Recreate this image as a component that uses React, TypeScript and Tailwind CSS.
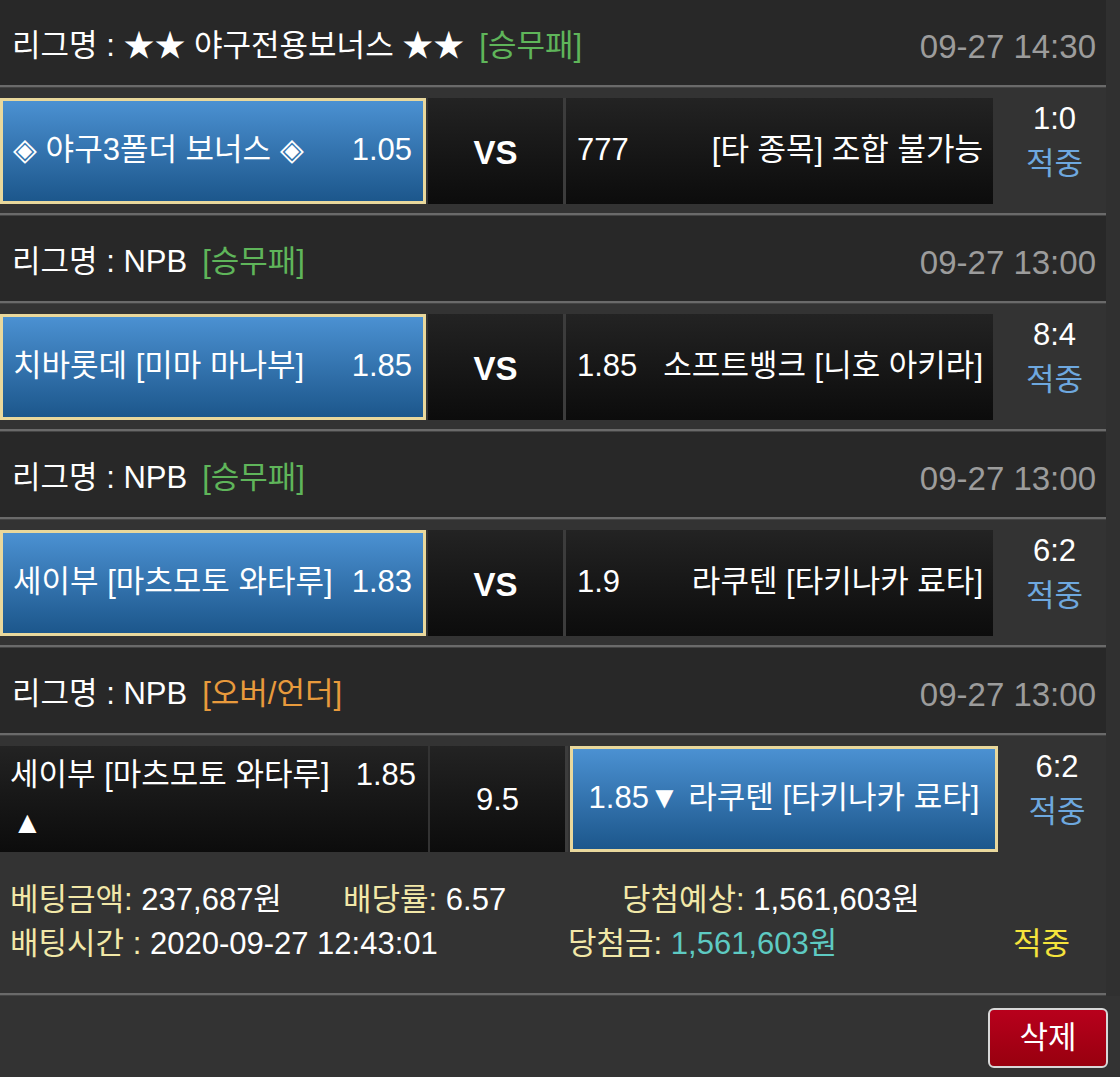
import React from 'react';

type Side = { text: string; odds: string };

type Match = {
  league: string;
  kind: string;
  kindColor: string;
  time: string;
  home: Side;
  middle: string;
  away: Side;
  picked: 'home' | 'away';
  score: string;
  result: string;
  overUnder?: boolean;
};

const matches: Match[] = [
  {
    league: '리그명 : ★★ 야구전용보너스 ★★',
    kind: '[승무패]',
    kindColor: 'text-[#5fb55a]',
    time: '09-27 14:30',
    home: { text: '◈ 야구3폴더 보너스 ◈', odds: '1.05' },
    middle: 'VS',
    away: { text: '[타 종목] 조합 불가능', odds: '777' },
    picked: 'home',
    score: '1:0',
    result: '적중',
  },
  {
    league: '리그명 : NPB',
    kind: '[승무패]',
    kindColor: 'text-[#5fb55a]',
    time: '09-27 13:00',
    home: { text: '치바롯데 [미마 마나부]', odds: '1.85' },
    middle: 'VS',
    away: { text: '소프트뱅크 [니호 아키라]', odds: '1.85' },
    picked: 'home',
    score: '8:4',
    result: '적중',
  },
  {
    league: '리그명 : NPB',
    kind: '[승무패]',
    kindColor: 'text-[#5fb55a]',
    time: '09-27 13:00',
    home: { text: '세이부 [마츠모토 와타루]', odds: '1.83' },
    middle: 'VS',
    away: { text: '라쿠텐 [타키나카 료타]', odds: '1.9' },
    picked: 'home',
    score: '6:2',
    result: '적중',
  },
  {
    league: '리그명 : NPB',
    kind: '[오버/언더]',
    kindColor: 'text-[#e89a3c]',
    time: '09-27 13:00',
    home: { text: '세이부 [마츠모토 와타루]', odds: '1.85' },
    middle: '9.5',
    away: { text: '라쿠텐 [타키나카 료타]', odds: '1.85' },
    picked: 'away',
    score: '6:2',
    result: '적중',
    overUnder: true,
  },
];

const blueCell =
  'bg-gradient-to-b from-[#4b91d2] to-[#1c578c] border-[3px] border-[#e9d89c] text-white';
const darkCell = 'bg-gradient-to-b from-[#232323] to-[#0c0c0c] text-white';

const Divider = () => (
  <div className="h-[3px] bg-[#6a6a6a] border-b border-[#444]" />
);

const LeagueHeader = ({ m }: { m: Match }) => (
  <div className="flex items-center justify-between h-[85px] bg-[#282828] pl-[12px] pr-[10px] pt-[8px]">
    <div className="flex items-center text-white">
      <span>{m.league}</span>
      <span className={`ml-[15px] ${m.kindColor}`}>{m.kind}</span>
    </div>
    <span className="text-[#9c9c9c] text-[33px]">{m.time}</span>
  </div>
);

const MatchRow = ({ m }: { m: Match }) => {
  const homeCls = m.picked === 'home' ? blueCell : darkCell;
  const awayCls = m.picked === 'away' ? blueCell : darkCell;
  return (
    <div className="flex items-center h-[125px] bg-[#333333]">
      {m.overUnder ? (
        <div className={`w-[428px] h-[106px] flex flex-col justify-center pl-[10px] pr-[12px] ${homeCls}`}>
          <div className="flex justify-between leading-[48px]">
            <span>{m.home.text}</span>
            <span>{m.home.odds}</span>
          </div>
          <div className="leading-[48px] pl-[2px]">▲</div>
        </div>
      ) : (
        <div className={`w-[426px] h-[106px] flex items-center justify-between pl-[10px] pr-[11px] ${homeCls}`}>
          <span>{m.home.text}</span>
          <span>{m.home.odds}</span>
        </div>
      )}
      <div
        className={`w-[135px] h-[106px] ml-[2px] flex items-center justify-center pt-[4px] ${darkCell} ${
          m.overUnder ? '' : 'font-bold text-[33px]'
        }`}
      >
        {m.middle}
      </div>
      <div className="w-[3px] h-[106px] bg-[#3c3c3c]" />
      {m.overUnder ? (
        <div className={`w-[428px] h-[106px] ml-[2px] flex items-center justify-center ${awayCls}`}>
          {m.away.odds}▼ {m.away.text}
        </div>
      ) : (
        <div className={`w-[427px] h-[106px] flex items-center justify-between pl-[11px] pr-[10px] ${awayCls}`}>
          <span>{m.away.odds}</span>
          <span>{m.away.text}</span>
        </div>
      )}
      <div className="flex-1 flex flex-col items-center leading-[45px] pl-[10px] pb-[20px]">
        <span className="text-white">{m.score}</span>
        <span className="text-[#6ea8df]">{m.result}</span>
      </div>
    </div>
  );
};

const App: React.FC = () => {
  return (
    <div className="w-[1120px] h-[1077px] bg-[#303030] overflow-hidden font-[family-name:'Liberation_Sans','Noto_Sans_CJK_KR',sans-serif] text-[31px]">
      <div className="w-[1106px]">
        {matches.map((m, i) => (
          <div key={i}>
            {i > 0 && <Divider />}
            <LeagueHeader m={m} />
            <Divider />
            <MatchRow m={m} />
          </div>
        ))}
        <div className="bg-[#333333] pt-[17px] pb-[27px] pl-[10px] leading-[44px]">
          <div className="flex">
            <span className="w-[333px]">
              <span className="text-[#f2e8a8]">베팅금액:</span>
              <span className="text-white"> 237,687원</span>
            </span>
            <span className="w-[279px]">
              <span className="text-[#f2e8a8]">배당률:</span>
              <span className="text-white"> 6.57</span>
            </span>
            <span>
              <span className="text-[#f2e8a8]">당첨예상:</span>
              <span className="text-white"> 1,561,603원</span>
            </span>
          </div>
          <div className="flex">
            <span className="w-[558px]">
              <span className="text-[#f2e8a8]">배팅시간 :</span>
              <span className="text-white"> 2020-09-27 12:43:01</span>
            </span>
            <span className="w-[445px]">
              <span className="text-[#f2e8a8]">당첨금:</span>
              <span className="text-[#5ecac2]"> 1,561,603원</span>
            </span>
            <span className="text-[#f5e43c]">적중</span>
          </div>
        </div>
        <Divider />
      </div>
      <div className="flex justify-end pr-[12px] pt-[12px] bg-[#333333] h-[90px]">
        <button className="w-[120px] h-[60px] rounded-[6px] border-2 border-[#d8d8d8] bg-gradient-to-b from-[#b8001c] to-[#98000f] text-white">
          삭제
        </button>
      </div>
    </div>
  );
};

export default App;
